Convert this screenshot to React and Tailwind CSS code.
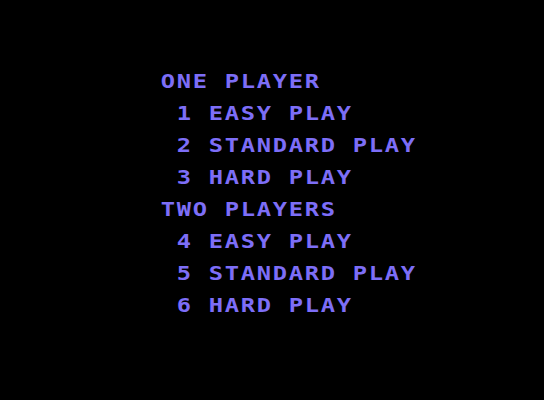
const MENU = [
  'ONE PLAYER',
  ' 1 EASY PLAY',
  ' 2 STANDARD PLAY',
  ' 3 HARD PLAY',
  'TWO PLAYERS',
  ' 4 EASY PLAY',
  ' 5 STANDARD PLAY',
  ' 6 HARD PLAY',
]

// one fixed 16px cell per character, like the console's text mode
function Line({ text }) {
  return (
    <div className="flex h-8 leading-8">
      {text.split('').map((ch, i) => (
        <span key={i} className="inline-block w-4 shrink-0 text-center scale-x-[1.25]">
          {ch === ' ' ? '\u00a0' : ch}
        </span>
      ))}
    </div>
  )
}

export default function App() {
  return (
    <div
      className="w-[544px] h-[400px] bg-black text-[#7d6ef7] text-[19px] font-bold pl-[160px] pt-[65px]"
      style={{ fontFamily: '"DejaVu Sans Mono", monospace' }}
    >
      {MENU.map((line, i) => (
        <Line key={i} text={line} />
      ))}
    </div>
  )
}
